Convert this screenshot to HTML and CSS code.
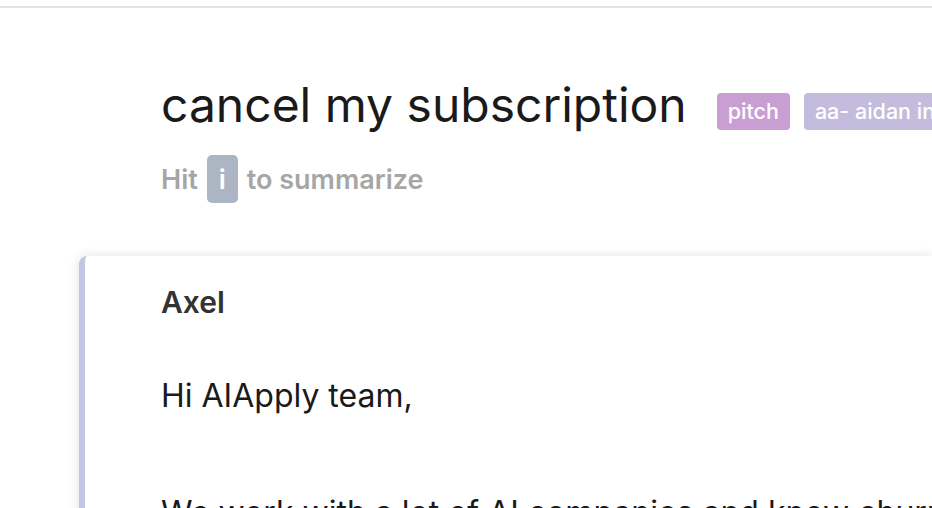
FILE: index.html
```html
<!DOCTYPE html>
<html>
<head>
<meta charset="utf-8">
<link rel="stylesheet" href="styles.css">
</head>
<body>
<div class="topbar"></div>
<main class="page">
  <header class="head">
    <div class="title-row">
      <h1 class="title">cancel my subscription</h1>
      <div class="tags">
        <span class="tag tag-pitch">pitch</span>
        <span class="tag tag-aidan">aa- aidan inbox</span>
      </div>
    </div>
    <p class="hint">Hit <kbd class="key">i</kbd> to summarize</p>
  </header>
  <section class="card">
    <div class="sender">Axel</div>
    <p class="msg">Hi AIApply team,</p>
    <p class="msg msg-next">We work with a lot of AI companies and know churn is one of the hardest problems to solve.</p>
  </section>
</main>
</body>
</html>
```
FILE: styles.css
```css
html, body {
  margin: 0;
  padding: 0;
  background: #ffffff;
  overflow: hidden;
}
body {
  font-family: "Inter", "Open Sans", sans-serif;
  width: 932px;
  height: 508px;
}
.topbar {
  height: 6px;
  border-bottom: 2px solid #e4e4e4;
}
.page {
  padding-left: 79px;
}
.head {
  padding-left: 82px;
  padding-top: 68px;
}
.title-row {
  display: flex;
  align-items: flex-start;
  gap: 30px;
  white-space: nowrap;
}
.title {
  margin: 0;
  font-size: 48px;
  font-weight: 400;
  color: #1a1a1a;
  line-height: 58px;
}
.tags {
  display: flex;
  gap: 14px;
  margin-top: 17px;
}
.tag {
  color: #ffffff;
  font-size: 21.5px;
  font-weight: 500;
  padding: 0 11px;
  height: 37px;
  line-height: 37px;
  border-radius: 4px;
}
.tag-pitch { background: #c99fd3; }
.tag-aidan { background: #c4bcdc; }
.hint {
  margin: 21px 0 0;
  font-size: 27px;
  font-weight: 600;
  color: #a6a6a6;
  display: flex;
  align-items: center;
  gap: 9px;
  height: 48px;
}
.key {
  font-family: inherit;
  background: #abb5c4;
  color: #ffffff;
  border-radius: 5px;
  width: 31px;
  height: 48px;
  display: inline-flex;
  align-items: center;
  justify-content: center;
  font-size: 27px;
  font-weight: 600;
}
.card {
  margin-top: 53px;
  border-left: 6px solid #c3c5e5;
  border-top-left-radius: 8px;
  box-shadow: 0 0 12px rgba(0,0,0,0.12);
  padding: 26px 0 0 76px;
  height: 400px;
  white-space: nowrap;
}
.sender {
  font-size: 30px;
  font-weight: 600;
  color: #333333;
  line-height: 40px;
}
.msg {
  margin: 52px 0 0;
  font-size: 32px;
  color: #1a1a1a;
  line-height: 44px;
}
.msg-next {
  margin-top: 73px;
}
```
